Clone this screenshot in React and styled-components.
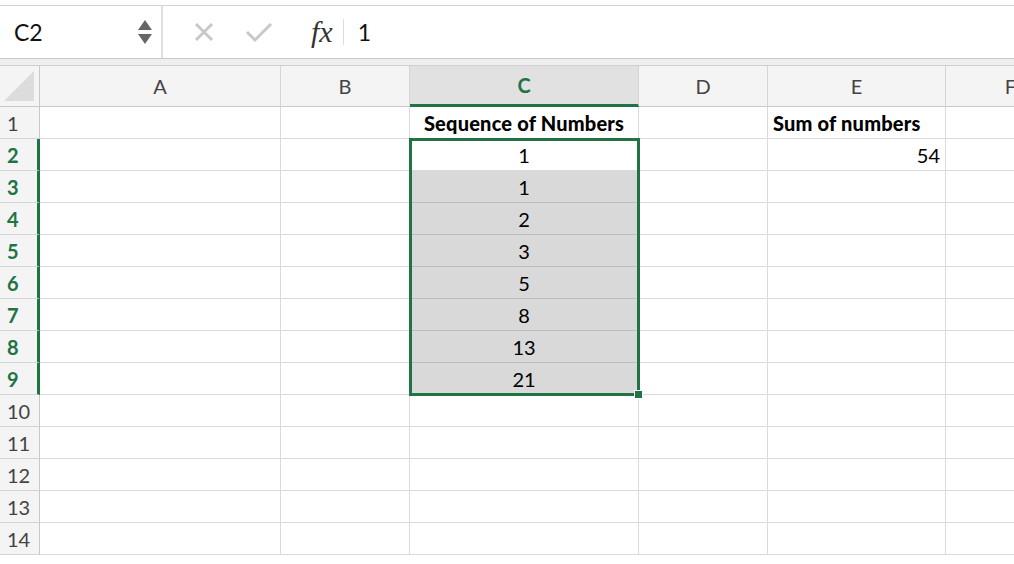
import React from "react";
import styled, { createGlobalStyle } from "styled-components";

const G = createGlobalStyle`
  html,body{margin:0;padding:0;background:#fff;overflow:hidden;}
  body{font-family:Lato,"Open Sans",sans-serif;}
`;
const Page = styled.div`width:1014px;height:564px;display:flex;flex-direction:column;background:#fff;overflow:hidden;`;
const Bar = styled.div`height:52px;margin-top:5px;display:flex;align-items:center;border-top:1px solid #d4d4d4;border-bottom:1px solid #c8c8c8;background:#fff;`;
const NameBox = styled.div`width:163px;height:100%;box-sizing:border-box;border-right:2px solid #e0e0e0;display:flex;align-items:center;justify-content:space-between;padding:0 9px 0 14px;font-size:23px;color:#111;`;
const Arrows = styled.div`display:flex;flex-direction:column;gap:4px;`;
const Tools = styled.div`display:flex;align-items:center;gap:30px;padding-left:30px;`;
const Fx = styled.span`font-family:"Liberation Serif",serif;font-style:italic;font-size:30px;color:#333;margin-left:8px;`;
const VSep = styled.div`width:1px;height:26px;background:#ddd;margin-left:-20px;`;
const Val = styled.span`font-size:23px;color:#111;margin-left:-16px;`;
const Gap = styled.div`height:6px;background:#efefef;border-bottom:1px solid #cfcfcf;`;
const Grid = styled.div`position:relative;display:grid;grid-template-columns:40px 241px 129px 229px 129px 178px 130px;grid-template-rows:41px repeat(14,32px);`;
const Cell = styled.div`
  box-sizing:border-box;border-right:1px solid #dadada;border-bottom:1px solid ${p=>p.$sel?"#bdbdbd":"#dadada"};
  display:flex;align-items:center;padding:0 5px;font-size:20px;color:#000;white-space:nowrap;overflow:hidden;
  justify-content:${p=>p.$align||"flex-start"};
  background:${p=>p.$sel?"#d9d9d9":"#fff"};
  font-weight:${p=>p.$bold?900:400};
  letter-spacing:${p=>p.$bold?"0.2px":"0"};
`;
const ColH = styled.div`
  box-sizing:border-box;background:${p=>p.$act?"#e1e1e1":"#f4f4f4"};border-right:1px solid #d4d4d4;
  border-bottom:${p=>p.$act?"3px solid #217346":"1px solid #c8c8c8"};
  display:flex;align-items:center;justify-content:center;font-size:20px;
  color:${p=>p.$act?"#217346":"#444"};font-weight:${p=>p.$act?700:400};
`;
const RowH = styled.div`
  box-sizing:border-box;background:#f4f4f4;border-bottom:1px solid #d4d4d4;
  border-right:${p=>p.$act?"3px solid #217346":"1px solid #c8c8c8"};
  display:flex;align-items:center;padding-left:7px;font-size:20px;
  color:${p=>p.$act?"#217346":"#444"};font-weight:${p=>p.$act?700:400};
`;
const Corner = styled.div`background:#f4f4f4;border-right:1px solid #c8c8c8;border-bottom:1px solid #c8c8c8;position:relative;
  &:after{content:"";position:absolute;right:5px;bottom:5px;border-style:solid;border-width:0 0 30px 30px;border-color:transparent transparent #dcdcdc transparent;}`;
const Sel = styled.div`position:absolute;left:409px;top:72px;width:231px;height:258px;box-sizing:border-box;border:3px solid #217346;pointer-events:none;`;
const Handle = styled.div`position:absolute;right:-6px;bottom:-6px;width:7px;height:7px;background:#217346;border:1px solid #fff;`;

const cols=["A","B","C","D","E","F"];
const data={1:{C:"Sequence of Numbers",E:"Sum of numbers"},2:{C:"1",E:"54"},3:{C:"1"},4:{C:"2"},5:{C:"3"},6:{C:"5"},7:{C:"8"},8:{C:"13"},9:{C:"21"}};

export default function App(){
  return <Page><G/>
    <Bar>
      <NameBox>C2<Arrows>
        <svg width="14" height="10"><path d="M7 0L14 10H0Z" fill="#666"/></svg>
        <svg width="14" height="10"><path d="M0 0H14L7 10Z" fill="#666"/></svg>
      </Arrows></NameBox>
      <Tools>
        <svg width="22" height="22"><path d="M3 3L19 19M19 3L3 19" stroke="#c8c8c8" strokeWidth="3"/></svg>
        <svg width="28" height="22"><path d="M2 11L10 19L26 3" stroke="#c8c8c8" strokeWidth="3" fill="none"/></svg>
        <Fx>fx</Fx><VSep/><Val>1</Val>
      </Tools>
    </Bar>
    <Gap/>
    <Grid>
      <Corner/>
      {cols.map(c=><ColH key={c} $act={c==="C"}>{c}</ColH>)}
      {Array.from({length:14},(_,i)=>i+1).map(r=><React.Fragment key={r}>
        <RowH $act={r>=2&&r<=9}>{r}</RowH>
        {cols.map(c=>{const v=(data[r]||{})[c];
          return <Cell key={c} $sel={c==="C"&&r>=3&&r<=9} $bold={r===1} $align={c==="C"?"center":c==="E"&&r===2?"flex-end":"flex-start"}>{v}</Cell>;})}
      </React.Fragment>)}
      <Sel><Handle/></Sel>
    </Grid>
  </Page>;
}
